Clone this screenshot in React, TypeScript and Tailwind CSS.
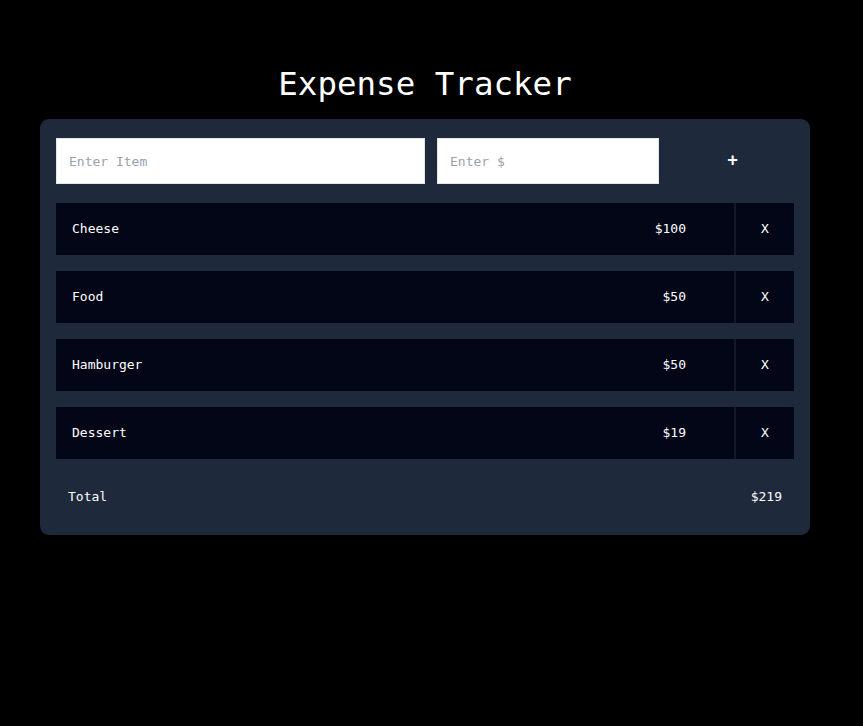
import { useState } from 'react'

type Expense = {
  id: number
  name: string
  amount: number
}

const initialExpenses: Expense[] = [
  { id: 1, name: 'Cheese', amount: 100 },
  { id: 2, name: 'Food', amount: 50 },
  { id: 3, name: 'Hamburger', amount: 50 },
  { id: 4, name: 'Dessert', amount: 19 },
]

export default function App() {
  const [expenses, setExpenses] = useState<Expense[]>(initialExpenses)
  const [item, setItem] = useState('')
  const [price, setPrice] = useState('')

  const total = expenses.reduce((sum, e) => sum + e.amount, 0)

  const addExpense = () => {
    const amount = Number(price)
    if (!item.trim() || !amount) return
    setExpenses([...expenses, { id: Date.now(), name: item.trim(), amount }])
    setItem('')
    setPrice('')
  }

  const removeExpense = (id: number) => {
    setExpenses(expenses.filter((e) => e.id !== id))
  }

  return (
    <div className="min-h-screen bg-black pt-[64px] font-['DejaVu_Sans_Mono',monospace] text-white">
      <div className="ml-[40px] w-[770px]">
        {/* Title */}
        <h1 className="mb-[15px] text-center text-[32.5px] leading-10 font-normal">Expense Tracker</h1>

        {/* Card */}
        <div className="rounded-[9px] bg-[#1e293b] px-4 pt-[19px] pb-4">
          <div className="flex gap-3">
            <input
              value={item}
              onChange={(e) => setItem(e.target.value)}
              placeholder="Enter Item"
              className="h-[46px] w-[369px] border border-gray-200 bg-white px-3 text-[13px] text-black outline-none placeholder:text-gray-400"
            />
            <input
              value={price}
              onChange={(e) => setPrice(e.target.value)}
              placeholder="Enter $"
              className="h-[46px] w-[222px] border border-gray-200 bg-white px-3 text-[13px] text-black outline-none placeholder:text-gray-400"
            />
            <button
              type="button"
              onClick={addExpense}
              className="flex h-[46px] flex-1 items-center justify-center text-[17px] font-bold text-white"
            >
              +
            </button>
          </div>

          {/* List */}
          <div className="mt-[19px] flex flex-col gap-4">
            {expenses.map((e) => (
              <div key={e.id} className="flex h-[52px] bg-[#020617] text-[13px]">
                <div className="flex flex-1 items-center pl-4">{e.name}</div>
                <div className="flex items-center pr-12">${e.amount}</div>
                <div className="w-[2px] bg-[#111827]" />
                <button
                  type="button"
                  onClick={() => removeExpense(e.id)}
                  className="flex w-[58px] items-center justify-center text-white"
                >
                  X
                </button>
              </div>
            ))}
          </div>

          {/* Total */}
          <div className="mt-4 flex h-[44px] items-center justify-between px-3 text-[13px]">
            <span>Total</span>
            <span>${total}</span>
          </div>
        </div>
      </div>
    </div>
  )
}
